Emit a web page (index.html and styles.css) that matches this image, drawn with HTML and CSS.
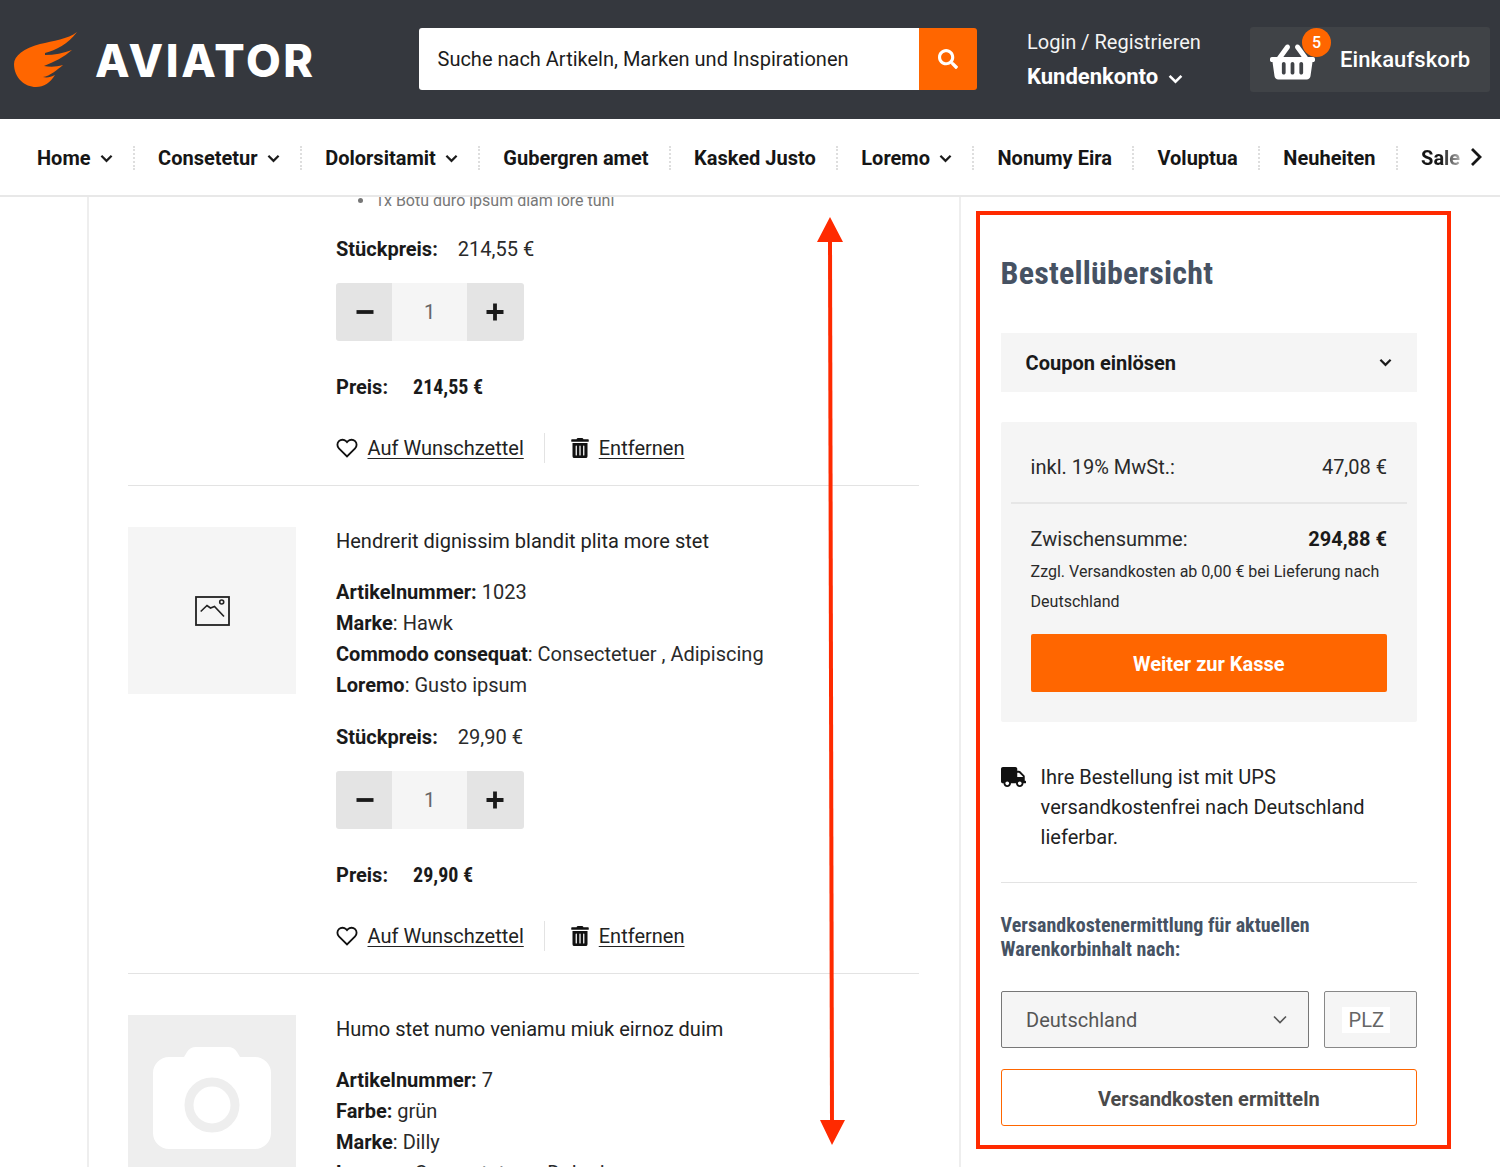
FILE: index.html
```html
<!DOCTYPE html>
<html lang="de">
<head>
<meta charset="utf-8">
<title>Aviator Warenkorb</title>
<link rel="stylesheet" href="styles.css">
</head>
<body>
<div class="page">
  <header class="topbar">
    <a class="logo">
      <svg class="logo-wing" viewBox="0 0 64 56" aria-hidden="true"><path d="M63 0C54 7 39 9 26 12C10 16 0 24 0 32C0 46 11 55 22 55C30 55 36 51 41 43C37 45 33 46 29 45C36 44 43 38 49 33C42 35 36 35 30 34C40 30 50 25 58 18C50 21 40 23 31 23L31 21C42 18 54 12 63 0Z"/></svg>
      <span class="logo-text">AVIATOR</span>
    </a>
    <form class="search">
      <div class="search-field">Suche nach Artikeln, Marken und Inspirationen</div>
      <button class="search-btn" type="button" aria-label="Suche">
        <svg viewBox="0 0 512 512"><path d="M505 442.7L405.3 343c-4.5-4.5-10.6-7-17-7H372c27.6-35.3 44-79.7 44-128C416 93.1 322.9 0 208 0S0 93.1 0 208s93.1 208 208 208c48.3 0 92.7-16.4 128-44v16.3c0 6.4 2.5 12.5 7 17l99.7 99.7c9.4 9.4 24.6 9.4 33.9 0l28.3-28.3c9.4-9.4 9.4-24.6.1-34zM208 336c-70.7 0-128-57.2-128-128 0-70.7 57.2-128 128-128 70.7 0 128 57.2 128 128 0 70.7-57.2 128-128 128z"/></svg>
      </button>
    </form>
    <div class="account">
      <div class="account-login">Login / Registrieren</div>
      <div class="account-name">Kundenkonto
        <svg class="chev chev-white" viewBox="0 0 14 9"><path d="M1.5 1.5L7 7l5.500-5.500"/></svg>
      </div>
    </div>
    <a class="basket">
      <span class="basket-icon">
        <svg viewBox="0 0 576 512"><path d="M576 216v16c0 13.255-10.745 24-24 24h-8l-26.113 182.788C514.509 462.435 494.257 480 470.37 480H105.63c-23.887 0-44.139-17.565-47.518-41.212L32 256h-8c-13.255 0-24-10.745-24-24v-16c0-13.255 10.745-24 24-24h67.341l106.78-146.821c10.395-14.292 30.407-17.453 44.701-7.058 14.293 10.395 17.453 30.408 7.058 44.701L170.477 192h235.046L326.12 82.821c-10.395-14.292-7.234-34.306 7.059-44.701 14.291-10.395 34.306-7.235 44.701 7.058L484.659 192H552c13.255 0 24 10.745 24 24zM312 392V280c0-13.255-10.745-24-24-24s-24 10.745-24 24v112c0 13.255 10.745 24 24 24s24-10.745 24-24zm112 0V280c0-13.255-10.745-24-24-24s-24 10.745-24 24v112c0 13.255 10.745 24 24 24s24-10.745 24-24zm-224 0V280c0-13.255-10.745-24-24-24s-24 10.745-24 24v112c0 13.255 10.745 24 24 24s24-10.745 24-24z"/></svg>
        <span class="basket-count">5</span>
      </span>
      <span class="basket-label">Einkaufskorb</span>
    </a>
  </header>

  <nav class="mainnav">
    <a class="nav-item">Home <svg class="chev" viewBox="0 0 14 9"><path d="M1.500 1.500L7 7l5.500-5.500"/></svg></a>
    <a class="nav-item">Consetetur <svg class="chev" viewBox="0 0 14 9"><path d="M1.500 1.500L7 7l5.500-5.500"/></svg></a>
    <a class="nav-item">Dolorsitamit <svg class="chev" viewBox="0 0 14 9"><path d="M1.500 1.500L7 7l5.500-5.500"/></svg></a>
    <a class="nav-item">Gubergren amet</a>
    <a class="nav-item">Kasked Justo</a>
    <a class="nav-item">Loremo <svg class="chev" viewBox="0 0 14 9"><path d="M1.500 1.500L7 7l5.500-5.500"/></svg></a>
    <a class="nav-item">Nonumy Eira</a>
    <a class="nav-item">Voluptua</a>
    <a class="nav-item">Neuheiten</a>
    <a class="nav-item nav-last">Sale</a>
    <svg class="nav-next" viewBox="0 0 12 20"><path d="M2 2l8 8-8 8"/></svg>
  </nav>

  <main class="content">
    <section class="cart">
      <div class="cart-list">
        <article class="item">
          <div class="item-media"></div>
          <div class="item-body">
            <ul class="item-bundle"><li>1x Botu duro ipsum diam lore tuni</li></ul>
            <p class="unit-price unit-price-first"><b>Stückpreis:</b><span>214,55 €</span></p>
            <div class="qty"><button class="qty-btn" type="button"><svg viewBox="0 0 20 20"><path d="M1.500 10h17"/></svg></button><span class="qty-val">1</span><button class="qty-btn" type="button"><svg viewBox="0 0 20 20"><path d="M1.500 10h17M10 1.500v17"/></svg></button></div>
            <p class="total"><b>Preis:</b><strong>214,55 €</strong></p>
            <div class="actions">
              <a class="action action-wish"><svg class="ico-heart" viewBox="0 0 24 24"><path d="M20.840 4.610a5.500 5.500 0 0 0-7.780 0L12 5.670l-1.060-1.060a5.500 5.500 0 0 0-7.780 7.780L12 21.230l8.840-8.840a5.500 5.500 0 0 0 0-7.780z"/></svg><u>Auf Wunschzettel</u></a>
              <a class="action action-del"><svg class="ico-trash" viewBox="0 0 448 512"><path d="M32 464a48 48 0 0 0 48 48h288a48 48 0 0 0 48-48V128H32zm272-256a16 16 0 0 1 32 0v224a16 16 0 0 1-32 0zm-96 0a16 16 0 0 1 32 0v224a16 16 0 0 1-32 0zm-96 0a16 16 0 0 1 32 0v224a16 16 0 0 1-32 0zM432 32H312l-9.400-18.700A24 24 0 0 0 281.100 0H166.800a23.720 23.720 0 0 0-21.400 13.300L136 32H16A16 16 0 0 0 0 48v32a16 16 0 0 0 16 16h416a16 16 0 0 0 16-16V48a16 16 0 0 0-16-16z"/></svg><u>Entfernen</u></a>
            </div>
          </div>
        </article>

        <article class="item item-full">
          <div class="item-media item-media-thumb">
            <svg class="thumb-ico" viewBox="0 0 36 32"><rect x="2" y="2" width="33" height="28"/><path d="M6.700 16.500L13 10.500l3.500 2.500 4-1.500L30 21.500"/><circle cx="27.700" cy="7" r="2"/></svg>
          </div>
          <div class="item-body">
            <h3 class="item-title">Hendrerit dignissim blandit plita more stet</h3>
            <div class="specs">
              <div><b>Artikelnummer:</b> 1023</div>
              <div><b>Marke</b>: Hawk</div>
              <div><b>Commodo consequat</b>: Consectetuer , Adipiscing</div>
              <div><b>Loremo</b>: Gusto ipsum</div>
            </div>
            <p class="unit-price"><b>Stückpreis:</b><span>29,90 €</span></p>
            <div class="qty"><button class="qty-btn" type="button"><svg viewBox="0 0 20 20"><path d="M1.500 10h17"/></svg></button><span class="qty-val">1</span><button class="qty-btn" type="button"><svg viewBox="0 0 20 20"><path d="M1.500 10h17M10 1.500v17"/></svg></button></div>
            <p class="total"><b>Preis:</b><strong>29,90 €</strong></p>
            <div class="actions">
              <a class="action action-wish"><svg class="ico-heart" viewBox="0 0 24 24"><path d="M20.840 4.610a5.500 5.500 0 0 0-7.780 0L12 5.670l-1.060-1.060a5.500 5.500 0 0 0-7.780 7.780L12 21.230l8.840-8.840a5.500 5.500 0 0 0 0-7.780z"/></svg><u>Auf Wunschzettel</u></a>
              <a class="action action-del"><svg class="ico-trash" viewBox="0 0 448 512"><path d="M32 464a48 48 0 0 0 48 48h288a48 48 0 0 0 48-48V128H32zm272-256a16 16 0 0 1 32 0v224a16 16 0 0 1-32 0zm-96 0a16 16 0 0 1 32 0v224a16 16 0 0 1-32 0zm-96 0a16 16 0 0 1 32 0v224a16 16 0 0 1-32 0zM432 32H312l-9.400-18.700A24 24 0 0 0 281.100 0H166.800a23.720 23.720 0 0 0-21.400 13.300L136 32H16A16 16 0 0 0 0 48v32a16 16 0 0 0 16 16h416a16 16 0 0 0 16-16V48a16 16 0 0 0-16-16z"/></svg><u>Entfernen</u></a>
            </div>
          </div>
        </article>

        <article class="item item-full">
          <div class="item-media item-media-photo">
            <svg class="photo-ico" viewBox="0 0 118 102"><path d="M0 26a16 16 0 0 1 16-16h15l3-5a11 11 0 0 1 9-5h32a11 11 0 0 1 9 5l3 5h15a16 16 0 0 1 16 16v60a16 16 0 0 1-16 16H16A16 16 0 0 1 0 86z"/><circle class="photo-ring" cx="59" cy="58" r="23"/></svg>
          </div>
          <div class="item-body">
            <h3 class="item-title">Humo stet numo veniamu miuk eirnoz duim</h3>
            <div class="specs">
              <div><b>Artikelnummer:</b> 7</div>
              <div><b>Farbe:</b> grün</div>
              <div><b>Marke</b>: Dilly</div>
              <div><b>Loremo</b>: Consectetuer , Dolor ipsum</div>
            </div>
          </div>
        </article>
      </div>
    </section>

    <aside class="summary">
      <h2 class="summary-title">Bestellübersicht</h2>
      <div class="coupon">Coupon einlösen
        <svg class="chev" viewBox="0 0 14 9"><path d="M1.500 1.500L7 7l5.500-5.500"/></svg>
      </div>
      <div class="totals">
        <div class="totals-row totals-tax"><span>inkl. 19% MwSt.:</span><span>47,08 €</span></div>
        <div class="totals-main">
          <div class="totals-row"><span>Zwischensumme:</span><strong>294,88 €</strong></div>
          <p class="totals-note">Zzgl. Versandkosten ab 0,00 € bei Lieferung nach Deutschland</p>
          <button class="checkout" type="button">Weiter zur Kasse</button>
        </div>
      </div>
      <div class="ship-note">
        <svg class="ico-truck" viewBox="0 0 640 512"><path d="M624 352h-16V243.900c0-12.700-5.100-24.900-14.100-33.900L494 110.100c-9-9-21.200-14.100-33.900-14.100H416V48c0-26.500-21.500-48-48-48H48C21.500 0 0 21.500 0 48v320c0 26.500 21.500 48 48 48h16c0 53 43 96 96 96s96-43 96-96h128c0 53 43 96 96 96s96-43 96-96h48c8.800 0 16-7.200 16-16v-32c0-8.800-7.200-16-16-16zM160 464c-26.500 0-48-21.500-48-48s21.500-48 48-48 48 21.500 48 48-21.500 48-48 48zm320 0c-26.500 0-48-21.500-48-48s21.500-48 48-48 48 21.500 48 48-21.500 48-48 48zm80-208H416V144h44.100l99.900 99.900V256z"/></svg>
        <p>Ihre Bestellung ist mit UPS versandkostenfrei nach Deutschland lieferbar.</p>
      </div>
      <div class="ship-calc">
        <h4 class="ship-title">Versandkostenermittlung für aktuellen Warenkorbinhalt nach:</h4>
        <div class="ship-fields">
          <div class="select">Deutschland
            <svg class="select-chev" viewBox="0 0 14 9"><path d="M1 1.500L7 7.500l6-6"/></svg>
          </div>
          <div class="plz"><span>PLZ</span></div>
        </div>
        <button class="calc-btn" type="button">Versandkosten ermitteln</button>
      </div>
    </aside>

    <svg class="scroll-arrow" viewBox="0 0 30 930" aria-hidden="true">
      <path class="scroll-line" d="M13 20L15 910"/>
      <path class="scroll-head" d="M13 0L26 25H0ZM15 928L3 903H28Z"/>
    </svg>
  </main>
</div>
</body>
</html>
```

FILE: styles.css
```css
* { box-sizing: border-box; }
html, body { margin: 0; padding: 0; }
body {
  font-family: Roboto, "Noto Sans", sans-serif;
  font-size: 20px;
  color: #1c1c1c;
  background: #fff;
}
p, h2, h3, h4, ul { margin: 0; padding: 0; font-weight: inherit; font-size: inherit; }
button { border: 0; font-family: inherit; padding: 0; cursor: pointer; }

.page { width: 1500px; height: 1167px; overflow: hidden; display: flex; flex-direction: column; }

/* header */
.topbar {
  height: 119px;
  background: #35383e;
  display: flex;
  align-items: center;
  padding-left: 14px;
  color: #fff;
  flex: none;
}
.logo { display: flex; align-items: center; width: 405px; }
.logo-wing { width: 64px; height: 56px; fill: #ff6600; }
.logo-text {
  font-family: Inter, sans-serif;
  font-weight: 800;
  font-size: 45px;
  line-height: 1;
  margin-left: 17px;
  letter-spacing: 2.600px;
  color: #fff;
  margin-top: 2px;
}
.search { display: flex; width: 558px; height: 62px; margin-bottom: 1px; }
.search-field {
  flex: 1;
  background: #fff;
  color: #1c1c1c;
  border-radius: 3px 0 0 3px;
  padding-left: 18.500px;
  line-height: 62px;
}
.search-btn {
  width: 58px;
  background: #ff6600;
  border-radius: 0 3px 3px 0;
  display: flex;
  align-items: center;
  justify-content: center;
}
.search-btn svg { width: 20px; height: 20px; fill: #fff; }
.account { margin-left: 50px; width: 223px; margin-top: 2px; }
.account-login { font-weight: 400; line-height: 30px; color: #f4f4f4; }
.account-name { font-weight: 700; font-size: 22px; line-height: 34px; margin-top: 3px; display: flex; align-items: center; gap: 10px; white-space: nowrap; }
.account-name .chev { width: 15px; height: 10px; margin-top: 3px; }
.chev { width: 13px; height: 9px; fill: none; stroke: #1c1c1c; stroke-width: 2.400; }
.chev-white { stroke: #fff; }
.basket {
  width: 240px;
  height: 65px;
  background: #404347;
  border-radius: 3px;
  display: flex;
  align-items: center;
  padding-left: 20px;
}
.basket-icon { position: relative; display: block; width: 45px; height: 36px; }
.basket-icon svg { width: 45px; height: 40px; fill: #fff; display: block; }
.basket-count {
  position: absolute;
  top: -14px;
  left: 32px;
  width: 29px;
  height: 29px;
  border-radius: 50%;
  background: #ff6600;
  color: #fff;
  font-size: 16px;
  font-weight: 500;
  line-height: 29px;
  text-align: center;
}
.basket-label { margin-left: 25px; font-weight: 500; font-size: 22px; letter-spacing: 0.100px; }

/* nav */
.mainnav {
  height: 78px;
  flex: none;
  display: flex;
  align-items: center;
  padding: 2px 0 0 14px;
  border-bottom: 2px solid #e8e8e8;
  position: relative;
  white-space: nowrap;
}
.nav-item {
  display: flex;
  align-items: center;
  gap: 9px;
  height: 24px;
  padding: 0 20.550px 0 23px;
  font-weight: 700;
  font-size: 20px;
  color: #161616;
  border-right: 2px dotted #dedede;
}
.nav-last {
  border-right: 0;
  background: linear-gradient(90deg, #161616 43px, #b0b0b0 62px);
  -webkit-background-clip: text;
  background-clip: text;
  color: transparent;
}
.nav-next { position: absolute; left: 1470px; top: 28px; width: 12px; height: 20px; fill: none; stroke: #161616; stroke-width: 2.800; }

/* main */
.content { flex: 1; min-height: 0; overflow: hidden; display: flex; padding-left: 87px; position: relative; }
.cart {
  width: 874px;
  flex: none;
  border-left: 2px solid #eeeeee;
  border-right: 2px solid #eeeeee;
  padding: 0 40px 0 39px;
}
.cart-list { margin-top: -12px; }
.item {
  display: grid;
  grid-template-columns: 168px 1fr;
  column-gap: 40px;
  padding-bottom: 22px;
  border-bottom: 1px solid #e3e3e3;
}
.item-full { padding-top: 41px; }
.item-media-thumb, .item-media-photo { width: 168px; height: 167px; background: #f5f5f5; display: flex; align-items: center; justify-content: center; }
.item-media-photo { background: #eeeeee; height: 190px; align-items: flex-start; padding-top: 32px; }
.thumb-ico { width: 36px; height: 32px; fill: none; stroke: #222; stroke-width: 1.600; }
.thumb-ico rect { stroke-width: 1.800; }
.photo-ico { width: 118px; height: 102px; fill: #fff; }
.photo-ring { fill: #fff; stroke: #eeeeee; stroke-width: 9; }
.item-bundle { list-style: disc; padding-left: 39px; font-size: 16px; line-height: 31px; color: #777; }
.item-title { line-height: 28px; font-size: 20px; color: #222; }
.specs { margin-top: 22px; line-height: 31px; color: #2a2a2a; }
.specs b, .unit-price b, .total b { font-weight: 700; color: #1a1a1a; }
.unit-price { margin-top: 21px; line-height: 30px; display: flex; gap: 20px; color: #2a2a2a; }
.unit-price-first { margin-top: 18px; }
.qty { margin-top: 19px; display: flex; width: 188px; height: 58px; }
.qty-btn { width: 56px; padding-left: 2px; background: #e4e4e4; display: flex; align-items: center; justify-content: center; border-radius: 3px 0 0 3px; }
.qty-btn:last-child { width: 57px; padding: 0 2px 0 0; border-radius: 0 3px 3px 0; }
.qty-btn svg { width: 20px; height: 20px; fill: none; stroke: #1a1a1a; stroke-width: 3.800; }
.qty-val { width: 75px; background: #f5f5f5; color: #666; text-align: center; line-height: 58px; font-size: 20px; }
.total { margin-top: 31px; line-height: 30px; display: flex; gap: 25px; }
.total strong { font-weight: 700; font-stretch: 75%; color: #1a1a1a; }
.actions { margin-top: 31px; height: 30px; display: flex; align-items: center; }
.action { display: flex; align-items: center; height: 30px; color: #222; }
.action u { text-underline-offset: 3px; text-decoration-thickness: 1px; }
.action-wish { gap: 9.500px; padding-right: 20.500px; border-right: 1px solid #e3e3e3; }
.action-del { gap: 9.500px; margin-left: 26px; }
.ico-heart { width: 22px; height: 22px; fill: none; stroke: #111; stroke-width: 2; }
.ico-trash { width: 18px; height: 20px; fill: #111; }

/* summary */
.summary {
  width: 475px;
  height: 938px;
  flex: none;
  margin: 14px 0 0 15px;
  border: 4px solid #ff2a00;
  padding: 0 30px 0 20.600px;
  background: #fff;
}
.summary-title {
  margin-top: 40px;
  font-size: 32px;
  line-height: 36px;
  font-weight: 700;
  font-stretch: 75%;
  letter-spacing: 0.200px;
  color: #465263;
}
.coupon {
  margin-top: 42px;
  height: 59px;
  background: #f5f5f5;
  padding: 0 25px;
  display: flex;
  align-items: center;
  justify-content: space-between;
  font-weight: 700;
  color: #1a1a1a;
}
.totals { margin-top: 30px; height: 300px; background: #f5f5f5; padding: 0 10px; border-radius: 2px; }
.totals-row { display: flex; justify-content: space-between; padding: 0 20px; line-height: 30px; color: #2a2a2a; }
.totals-row strong { font-weight: 700; color: #1a1a1a; }
.totals-tax { padding-top: 30px; padding-bottom: 20px; border-bottom: 2px solid #e6e6e6; }
.totals-main { padding: 20px 20px 0; }
.totals-main .totals-row { padding: 0; }
.totals-note { font-size: 16px; line-height: 30px; color: #2a2a2a; margin-top: 3px; }
.checkout {
  display: block;
  width: 100%;
  height: 58px;
  margin-top: 17px;
  padding-top: 2px;
  background: #ff6600;
  color: #fff;
  font-size: 20px;
  font-weight: 700;
  border-radius: 2px;
}
.ship-note { margin-top: 40px; display: flex; gap: 15px; padding-bottom: 30px; border-bottom: 1px solid #e3e3e3; }
.ship-note p { line-height: 30px; color: #222; }
.ico-truck { width: 25px; height: 20px; fill: #111; flex: none; margin-top: 5px; }
.ship-title {
  margin-top: 30px;
  font-size: 20px;
  line-height: 24px;
  font-weight: 700;
  font-stretch: 75%;
  color: #465263;
}
.ship-fields { margin-top: 30px; display: flex; gap: 15px; height: 57px; }
.select {
  width: 308px;
  background: #f5f5f5;
  border: 1px solid #777;
  border-radius: 2px;
  color: #555;
  display: flex;
  align-items: center;
  justify-content: space-between;
  padding: 0 21px 0 24.500px;
}
.select-chev { width: 14px; height: 9px; fill: none; stroke: #555; stroke-width: 1.600; }
.plz {
  flex: 1;
  background: #f5f5f5;
  border: 1px solid #888;
  border-radius: 2px;
  display: flex;
  align-items: center;
  padding-left: 17px;
}
.plz span { background: #fff; color: #666; padding: 0 6px 0 7px; line-height: 26px; }
.calc-btn {
  display: block;
  width: 100%;
  height: 57px;
  margin-top: 21px;
  padding-top: 3px;
  background: #fff;
  border: 1px solid #ff6600;
  border-radius: 3px;
  color: #4a4a4a;
  font-size: 20px;
  font-weight: 700;
}

/* annotation overlay */
.scroll-arrow { position: absolute; left: 817px; top: 20px; width: 30px; height: 930px; }
.scroll-line { fill: none; stroke: #ff2a00; stroke-width: 4; }
.scroll-head { fill: #ff2a00; }
```
